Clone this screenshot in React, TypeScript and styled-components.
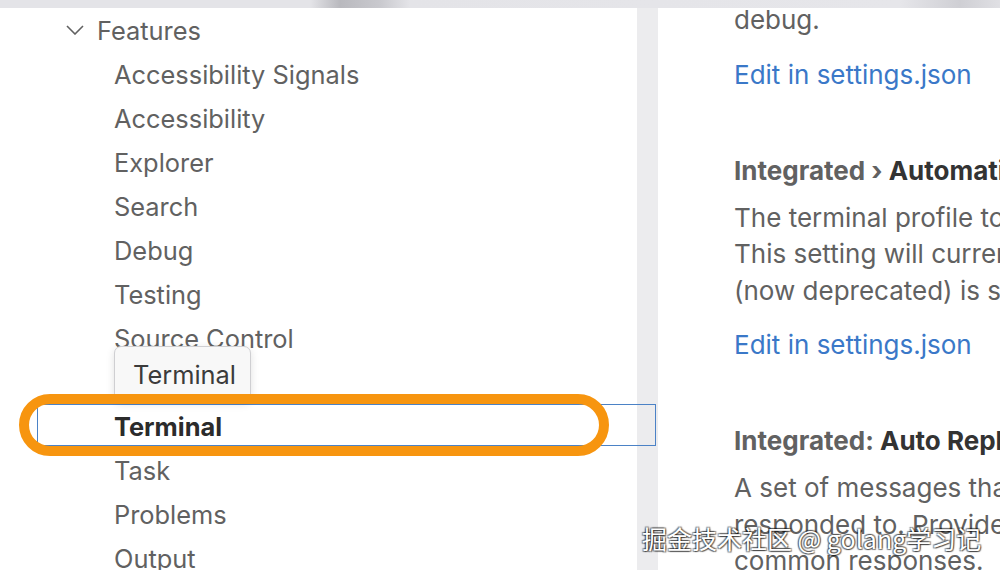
import styled, { createGlobalStyle } from "styled-components"

const Global = createGlobalStyle`
html, body {
    margin: 0;
    padding: 0;
    background: #ffffff;
}
body {
    font-family: Inter, "Noto Sans", "Liberation Sans", sans-serif;
}
`

const Pagina = styled.div`
width: 1000px;
height: 570px;
overflow: hidden;
display: flex;
flex-direction: column;
position: relative;
background: #ffffff;
`

const FaixaTopo = styled.div`
height: 8px;
flex-shrink: 0;
background: linear-gradient(90deg, #e4e4e8 0%, #e4e4e8 31%, #b9b9be 34%, #c9c9ce 38%, #e4e4e8 41%, #e6e6ea 90%, #cfcfd4 96%, #e0e0e4 100%);
position: relative;
z-index: 3;
`

const Corpo = styled.div`
flex: 1;
display: flex;
min-height: 0;
`

const PainelArvore = styled.div`
width: 637px;
flex-shrink: 0;
position: relative;
z-index: 1;
`

const Divisor = styled.div`
width: 21px;
flex-shrink: 0;
background: #ececee;
`

const PainelConfig = styled.div`
flex: 1;
padding-left: 76px;
overflow: hidden;
white-space: nowrap;
`

const Linha = styled.div<{ nivel: number; selecionada?: boolean }>`
height: 44px;
display: flex;
align-items: center;
padding-left: ${p => (p.nivel === 0 ? 66 : 114)}px;
font-size: 25.4px;
color: ${p => (p.selecionada ? "#2b2b2b" : "#616161")};
font-weight: ${p => (p.selecionada ? 700 : 400)};
position: relative;
${p => p.selecionada && `
&::after {
    content: '';
    position: absolute;
    left: 37px;
    right: -19px;
    top: 0;
    bottom: 2px;
    border: 1.5px solid #4b82c6;
}
`}
`

const Seta = styled.svg`
width: 18px;
height: 10px;
margin-right: 13px;
`

const Dica = styled.div`
position: absolute;
left: 114px;
top: 338px;
width: 137px;
height: 56px;
box-sizing: border-box;
padding-left: 18px;
display: flex;
align-items: center;
background: #f8f8f8;
border: 1px solid #cfcfd2;
border-radius: 7px;
box-shadow: 0 2px 8px rgba(0, 0, 0, 0.12);
font-size: 25.4px;
color: #3b3b3b;
z-index: 2;
`

const Destaque = styled.div`
position: absolute;
left: 19px;
top: 386px;
width: 590px;
height: 62px;
box-sizing: border-box;
border: 10px solid #f7950f;
border-radius: 31px;
z-index: 2;
`

const Texto = styled.div<{ topo?: number }>`
font-size: 26px;
line-height: 36.5px;
color: #616161;
margin-top: ${p => p.topo ?? 0}px;
`

const Link = styled.div`
font-size: 26px;
line-height: 36px;
color: #3a78c8;
margin-top: 18px;
`

const Titulo = styled.div`
font-size: 26px;
line-height: 36px;
font-weight: 700;
color: #616161;
margin-top: 60px;
`

const TituloNome = styled.span`
color: #333333;
`

const MarcaDagua = styled.div`
position: absolute;
left: 642px;
top: 520px;
font-family: "Noto Sans CJK SC", "Noto Sans", sans-serif;
font-size: 25px;
line-height: 36px;
color: #ffffff;
white-space: nowrap;
text-shadow: 1px 1px 1px rgba(0, 0, 0, 0.55), -1px -1px 1px rgba(0, 0, 0, 0.45), 1px -1px 1px rgba(0, 0, 0, 0.45), -1px 1px 1px rgba(0, 0, 0, 0.45);
z-index: 4;
`

const itens = [
    "Accessibility Signals",
    "Accessibility",
    "Explorer",
    "Search",
    "Debug",
    "Testing",
    "Source Control",
    "Extensions",
    "Terminal",
    "Task",
    "Problems",
    "Output",
]

export default function App() {
    return (
        <Pagina>
            <Global />
            <FaixaTopo />
            <Corpo>
                <PainelArvore>
                    <Linha nivel={0}>
                        <Seta viewBox="0 0 18 10">
                            <polyline points="1,1 9,9 17,1" fill="none" stroke="#616161" strokeWidth="1.6" />
                        </Seta>
                        Features
                    </Linha>
                    {itens.map(item => (
                        <Linha key={item} nivel={1} selecionada={item === "Terminal"}>
                            {item}
                        </Linha>
                    ))}
                    <Dica>Terminal</Dica>
                    <Destaque />
                </PainelArvore>
                <Divisor />
                <PainelConfig>
                    <Texto topo={-6}>debug.</Texto>
                    <Link>Edit in settings.json</Link>

                    <Titulo>
                        Integrated › <TituloNome>Automation Profile: Linux</TituloNome>
                    </Titulo>
                    <Texto topo={11}>
                        The terminal profile to use on Linux for automation-related terminal usage like tasks and
                        <br />
                        This setting will currently be ignored if terminal.integrated.automationShell.linux
                        <br />
                        (now deprecated) is set.
                    </Texto>
                    <Link>Edit in settings.json</Link>

                    <Titulo>
                        Integrated: <TituloNome>Auto Replies</TituloNome>
                    </Titulo>
                    <Texto topo={11}>
                        A set of messages that, when encountered in the terminal, will be automatically
                        <br />
                        responded to. Provided the message is specific enough, this can help automate away
                        <br />
                        common responses.
                    </Texto>
                </PainelConfig>
            </Corpo>
            <MarcaDagua>掘金技术社区 @ golang学习记</MarcaDagua>
        </Pagina>
    )
}
